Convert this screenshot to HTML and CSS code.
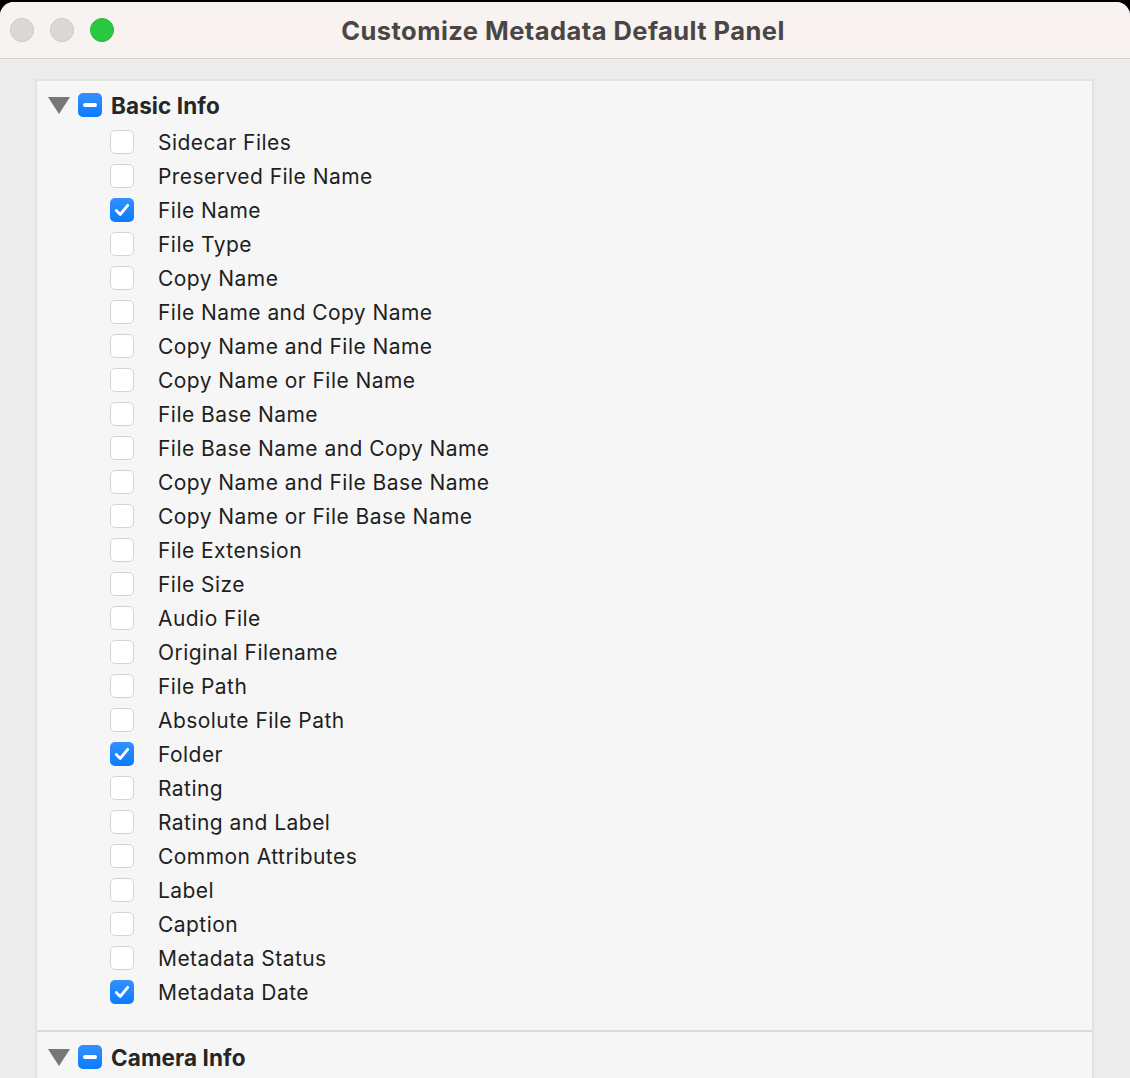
FILE: index.html
```
<!DOCTYPE html>
<html>
<head>
<meta charset="utf-8">
<link rel="stylesheet" href="styles.css">
</head>
<body>
<div class="window">
  <div class="titlebar">
    <div class="lights">
      <span class="light gray"></span>
      <span class="light gray"></span>
      <span class="light green"></span>
    </div>
    <div class="title">Customize Metadata Default Panel</div>
  </div>
  <div class="content">
    <div class="panel">
      <div class="section">
        <div class="group-header">
          <span class="disclosure"></span>
          <span class="mixed"><span class="bar"></span></span>
          <span class="group-title">Basic Info</span>
        </div>
        <ul class="items">
          <li class="item"><span class="box"></span><span class="label">Sidecar Files</span></li>
          <li class="item"><span class="box"></span><span class="label">Preserved File Name</span></li>
          <li class="item"><span class="box on"><svg viewBox="0 0 24 24" width="24" height="24"><path d="M6.3 12.6 L10.2 16.5 L17.7 7.3" fill="none" stroke="#fff" stroke-width="2.8" stroke-linecap="round" stroke-linejoin="round"/></svg></span><span class="label">File Name</span></li>
          <li class="item"><span class="box"></span><span class="label">File Type</span></li>
          <li class="item"><span class="box"></span><span class="label">Copy Name</span></li>
          <li class="item"><span class="box"></span><span class="label">File Name and Copy Name</span></li>
          <li class="item"><span class="box"></span><span class="label">Copy Name and File Name</span></li>
          <li class="item"><span class="box"></span><span class="label">Copy Name or File Name</span></li>
          <li class="item"><span class="box"></span><span class="label">File Base Name</span></li>
          <li class="item"><span class="box"></span><span class="label">File Base Name and Copy Name</span></li>
          <li class="item"><span class="box"></span><span class="label">Copy Name and File Base Name</span></li>
          <li class="item"><span class="box"></span><span class="label">Copy Name or File Base Name</span></li>
          <li class="item"><span class="box"></span><span class="label">File Extension</span></li>
          <li class="item"><span class="box"></span><span class="label">File Size</span></li>
          <li class="item"><span class="box"></span><span class="label">Audio File</span></li>
          <li class="item"><span class="box"></span><span class="label">Original Filename</span></li>
          <li class="item"><span class="box"></span><span class="label">File Path</span></li>
          <li class="item"><span class="box"></span><span class="label">Absolute File Path</span></li>
          <li class="item"><span class="box on"><svg viewBox="0 0 24 24" width="24" height="24"><path d="M6.3 12.6 L10.2 16.5 L17.7 7.3" fill="none" stroke="#fff" stroke-width="2.8" stroke-linecap="round" stroke-linejoin="round"/></svg></span><span class="label">Folder</span></li>
          <li class="item"><span class="box"></span><span class="label">Rating</span></li>
          <li class="item"><span class="box"></span><span class="label">Rating and Label</span></li>
          <li class="item"><span class="box"></span><span class="label">Common Attributes</span></li>
          <li class="item"><span class="box"></span><span class="label">Label</span></li>
          <li class="item"><span class="box"></span><span class="label">Caption</span></li>
          <li class="item"><span class="box"></span><span class="label">Metadata Status</span></li>
          <li class="item"><span class="box on"><svg viewBox="0 0 24 24" width="24" height="24"><path d="M6.3 12.6 L10.2 16.5 L17.7 7.3" fill="none" stroke="#fff" stroke-width="2.8" stroke-linecap="round" stroke-linejoin="round"/></svg></span><span class="label">Metadata Date</span></li>
        </ul>
      </div>
      <div class="section second">
        <div class="group-header">
          <span class="disclosure"></span>
          <span class="mixed"><span class="bar"></span></span>
          <span class="group-title">Camera Info</span>
        </div>
      </div>
    </div>
  </div>
</div>
</body>
</html>
```

FILE: styles.css
```
* { box-sizing: border-box; }
html, body {
  margin: 0;
  padding: 0;
  background: #000;
  height: 1078px;
  overflow: hidden;
}
body {
  font-family: Inter, "Liberation Sans", sans-serif;
  padding-top: 2px;
}
.window {
  height: 1076px;
  background: #ececec;
  border-radius: 14px 14px 0 0;
  overflow: hidden;
  display: flex;
  flex-direction: column;
}
.titlebar {
  height: 57px;
  flex: none;
  background: #f8f3f0;
  border-bottom: 1px solid #d5d0cc;
  display: flex;
  align-items: center;
  position: relative;
}
.lights {
  display: flex;
  gap: 16px;
  padding-left: 10px;
}
.light {
  width: 24px;
  height: 24px;
  border-radius: 50%;
  display: block;
}
.light.gray {
  background: #dcd8d5;
  border: 1px solid #cdc8c5;
}
.light.green {
  background: #2ac840;
  border: 1px solid #24b63a;
}
.title {
  position: absolute;
  left: 0;
  right: 0;
  top: 0;
  bottom: 0;
  display: flex;
  align-items: center;
  justify-content: center;
  font-size: 25.5px;
  font-weight: 700;
  color: #4a4646;
  padding-right: 4px;
  letter-spacing: 0.45px;
}
.content {
  flex: 1;
  padding: 20px 36px 0 35px;
}
.panel {
  background: #f6f6f6;
  border: 2px solid #e3e3e3;
  border-bottom: none;
  height: 100%;
}
.section {
  padding-top: 4px;
  padding-bottom: 21px;
}
.section.second {
  border-top: 2px solid #dcdcdc;
  padding-top: 5px;
  padding-bottom: 0;
}
.group-header {
  height: 40px;
  display: flex;
  align-items: center;
  padding-left: 11px;
}
.disclosure {
  width: 0;
  height: 0;
  border-left: 11px solid transparent;
  border-right: 11px solid transparent;
  border-top: 17px solid #777777;
  margin-right: 8px;
}
.mixed {
  width: 24px;
  height: 24px;
  border-radius: 5px;
  background: linear-gradient(#3590ff, #0b7bfc);
  display: flex;
  align-items: center;
  justify-content: center;
  margin-right: 9px;
}
.mixed .bar {
  width: 14px;
  height: 4px;
  border-radius: 2px;
  background: #fff;
}
.group-title {
  font-size: 22.5px;
  font-weight: 700;
  color: #262626;
  letter-spacing: 0.1px;
}
.items {
  list-style: none;
  margin: 0;
  padding: 0;
}
.item {
  height: 34px;
  display: flex;
  align-items: center;
  padding-left: 73px;
}
.box {
  width: 24px;
  height: 24px;
  border-radius: 5px;
  background: #ffffff;
  border: 1px solid #d4d4d4;
  margin-right: 24px;
  flex: none;
  display: flex;
}
.box.on {
  background: linear-gradient(#3590ff, #0b7bfc);
  border: none;
}
.label {
  font-size: 21px;
  color: #1f1f1f;
  letter-spacing: 0.45px;
}
```
